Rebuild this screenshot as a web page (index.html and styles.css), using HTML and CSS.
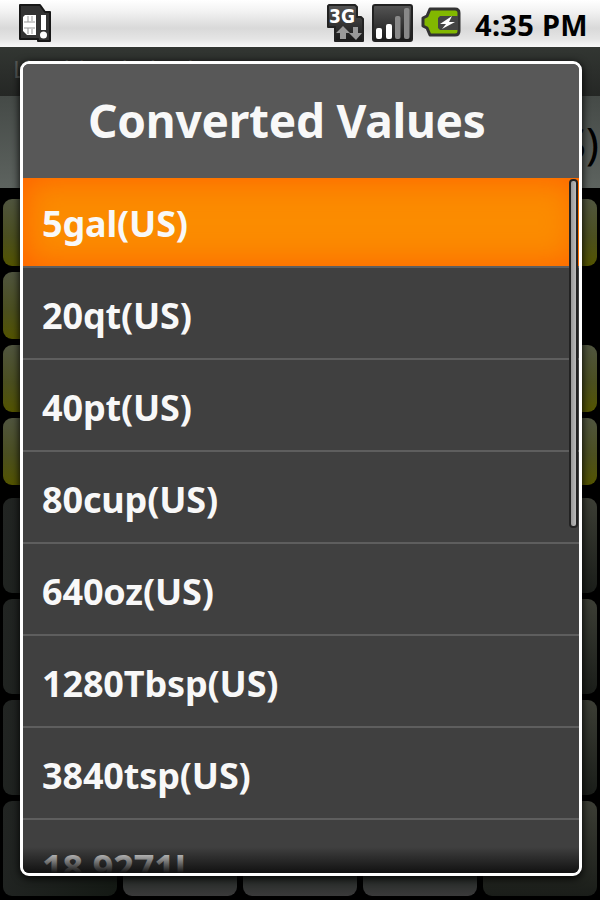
FILE: index.html
```html
<!DOCTYPE html>
<html>
<head>
    <meta charset="utf-8">
    <title>Converted Values</title>
    <link rel="stylesheet" href="styles.css">
</head>
<body>
    <div class="statusbar">
        <svg class="sim" width="34" height="40" viewBox="0 0 34 40">
            <path d="M1 1 H21 L26 8 H31 V37 H19 V35 H1 Z" fill="#333" stroke="#171717" stroke-width="2" stroke-linejoin="round"/>
            <path d="M6 11 H17 V31 H8 L4 27 V13 Z" fill="#fff"/>
            <path d="M5 18 H16 M5 24 H16 M9 12 V18 M13 12 V17 M9 24 V30 M13 25 V30" stroke="#999"/>
            <path d="M22 11 H27 V26 H22 Z" fill="#fff"/>
            <circle cx="24.5" cy="31" r="3.5" fill="#fff"/>
        </svg>
        <svg class="tray" width="136" height="40" viewBox="0 0 136 40">
            <defs>
                <linearGradient id="dark" x1="0" y1="0" x2="0" y2="1">
                    <stop offset="0" stop-color="#555"/>
                    <stop offset="1" stop-color="#181818"/>
                </linearGradient>
            </defs>
            <!-- 3G data -->
            <path d="M3 1 H29 L31 3 V13 H35 L37 15 V37 H9 V23 H2 V2 Z" fill="url(#dark)" stroke="#222" stroke-width="2" stroke-linejoin="round"/>
            <text x="3" y="19" class="net" textLength="26" lengthAdjust="spacingAndGlyphs">3G</text>
            <path d="M17 22 L24 29 H20 V35 H14 V29 H10 Z M27 23 H32 V29 H36 L30 36 L23 29 H27 Z" fill="#999"/>
            <!-- signal -->
            <rect x="47" y="1" width="39" height="36" rx="2" fill="url(#dark)" stroke="#222" stroke-width="2"/>
            <rect x="50" y="24" width="6" height="11" rx="2" fill="#fff"/>
            <rect x="60" y="20" width="6" height="15" rx="2" fill="#fff"/>
            <rect x="69" y="12" width="5.5" height="23" rx="2" fill="#888"/>
            <rect x="78" y="4" width="5.5" height="31" rx="2" fill="#888"/>
            <!-- battery -->
            <path d="M104 5 H129 Q133 5 133 9 V27 Q133 31 129 31 H104 L101 24 L97 22 V14 L101 12 Z" fill="#82b800" stroke="#333" stroke-width="3" stroke-linejoin="round"/>
            <path d="M132 12 H114 L112 14 V24 L114 26 H132 Z" fill="#444"/>
            <path d="M126 12 L114 20 H120 L116 25 L129 18 H123 Z" fill="#fff"/>
        </svg>
        <span class="clock">4:35 PM</span>
    </div>
    <div class="titlebar">Live blended calc</div>
    <div class="display">(US)</div>
    <div class="keys">
        <div class="row"><i></i><i></i><i></i><i></i><i></i></div>
        <div class="row"><i></i><i></i><i></i><i></i><i class="none"></i></div>
        <div class="row"><i></i><i></i><i></i><i></i><i></i></div>
        <div class="row last"><i></i><i></i><i></i><i></i><i></i></div>
        <div class="row tall"><i></i><i></i><i></i><i></i><i></i></div>
        <div class="row tall"><i></i><i></i><i></i><i></i><i></i></div>
        <div class="row tall"><i></i><i></i><i></i><i></i><i></i></div>
        <div class="row tall"><i></i><i></i><i></i><i></i><i></i></div>
    </div>

    <div class="dialog">
        <h1>Converted Values</h1>
        <ul class="list">
            <li class="selected">5gal(US)</li>
            <li>20qt(US)</li>
            <li>40pt(US)</li>
            <li>80cup(US)</li>
            <li>640oz(US)</li>
            <li>1280Tbsp(US)</li>
            <li>3840tsp(US)</li>
            <li>18.9271L</li>
        </ul>
        <div class="scrollbar"></div>
        <div class="fade"></div>
    </div>
</body>
</html>
```
FILE: styles.css
```css
* {
    box-sizing: border-box;
}
body {
    margin: 0;
    width: 600px;
    height: 900px;
    overflow: hidden;
    position: relative;
    background: #000;
    font-family: "Noto Sans", "Open Sans", sans-serif;
}
.statusbar {
    display: flex;
    height: 47px;
    padding: 4px 12px 0 19px;
    background: linear-gradient(#fff, #f2f2f2 25%, #d9d9d9 60%, #e4e4e4 82%, #f8f8f8);
}
.tray {
    margin-left: auto;
}
.net {
    font-family: "DejaVu Sans", sans-serif;
    font-size: 20px;
    font-weight: bold;
    fill: #fff;
}
.clock {
    margin-left: 13px;
    width: 113px;
    line-height: 42px;
    font-size: 29px;
    font-weight: bold;
    letter-spacing: 0.3px;
    white-space: nowrap;
    color: #000;
}
.titlebar {
    height: 49px;
    padding: 5px 13px;
    background: linear-gradient(#323632, #252725);
    color: #555855;
    font-size: 24px;
    line-height: 33px;
}
.display {
    height: 92px;
    padding-right: 1px;
    background: linear-gradient(#454a47, #5d635f);
    color: #000;
    font-size: 43px;
    line-height: 94px;
    text-align: right;
}
.keys {
    padding: 11px 3px 0;
}
.row {
    display: flex;
    gap: 6px;
    height: 67px;
    margin-bottom: 6px;
}
.row i {
    flex: 1;
    border-radius: 9px;
    background: linear-gradient(#50553f, #4b4f20 55%, #535400);
}
.row .none {
    background: none;
}
.last {
    margin-bottom: 13px;
}
.tall {
    height: 95px;
}
.tall i {
    background: linear-gradient(#1d1f1d, #262a28 80%, #3a3a3a);
}
.tall i:first-child {
    background: linear-gradient(100deg, #222523, #141914);
}
.tall i:last-child {
    background: linear-gradient(#3c3e35, #1a1d19);
}
.dialog {
    position: absolute;
    left: 20px;
    top: 61px;
    width: 562px;
    height: 815px;
    overflow: hidden;
    border: 3px solid #fff;
    border-radius: 9px;
    background: #404040;
    box-shadow: 0 2px 8px #000;
    color: #f8f8f8;
}
.dialog h1 {
    height: 114px;
    margin: 0;
    padding-left: 65px;
    background: #585858;
    font-size: 46px;
    letter-spacing: -0.25px;
    line-height: 112px;
    white-space: nowrap;
}
.list {
    margin: 0;
    padding: 0;
    list-style: none;
}
.list li {
    height: 92px;
    padding: 3px 0 0 19px;
    border-bottom: 2px solid #5e5e5e;
    font-size: 36px;
    font-weight: bold;
    letter-spacing: -0.15px;
    line-height: 90px;
}
.list .selected {
    height: 90px;
    padding-top: 1px;
    background: #fb8c00;
    box-shadow: inset 0 0 34px #ff5e00;
}
.scrollbar {
    position: absolute;
    right: 1px;
    top: 115px;
    width: 9px;
    height: 349px;
    border: 2px solid #222;
    border-radius: 4px;
    background: linear-gradient(90deg, #999, #bbb);
}
.fade {
    position: absolute;
    left: 0;
    right: 0;
    bottom: 0;
    height: 26px;
    background: linear-gradient(transparent, #111);
}
```
